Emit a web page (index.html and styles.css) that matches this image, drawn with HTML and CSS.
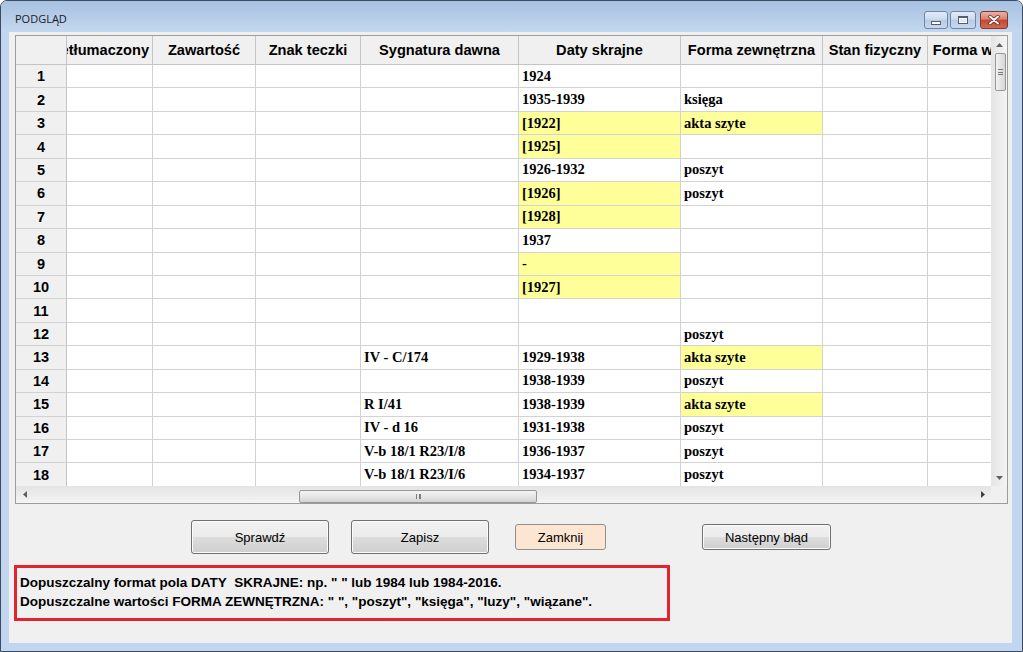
FILE: index.html
```html
<!DOCTYPE html>
<html lang="pl">
<head>
<meta charset="utf-8">
<title>PODGLĄD</title>
<link rel="stylesheet" href="styles.css">
</head>
<body>
<div class="window">
  <div class="titlebar">
    <span class="title">PODGLĄD</span>
    <div class="caption-btns">
      <div class="cbtn min"><span class="min-bar"></span></div>
      <div class="cbtn max"><span class="max-box"></span></div>
      <div class="cbtn close">
        <svg width="12" height="10" viewBox="0 0 12 10"><path d="M2 1.5 L10 8.5 M10 1.5 L2 8.5" stroke="#5a1a10" stroke-width="3.4" stroke-linecap="round"/><path d="M2 1.5 L10 8.5 M10 1.5 L2 8.5" stroke="#fff" stroke-width="2" stroke-linecap="round"/></svg>
      </div>
    </div>
  </div>
  <div class="frame">
    <div class="client">
      <div class="gridview">
        <div class="data">
          <div class="row head">
            <div class="c corner"></div>
            <div class="c hc clipl">Przetłumaczony</div>
            <div class="c hc">Zawartość</div>
            <div class="c hc">Znak teczki</div>
            <div class="c hc">Sygnatura dawna</div>
            <div class="c hc">Daty skrajne</div>
            <div class="c hc">Forma zewnętrzna</div>
            <div class="c hc">Stan fizyczny</div>
            <div class="c hc">Forma wewnętrzna</div>
          </div>
          <div class="row"><div class="c rh">1</div><div class="c"></div><div class="c"></div><div class="c"></div><div class="c"></div><div class="c">1924</div><div class="c"></div><div class="c"></div><div class="c"></div></div>
          <div class="row"><div class="c rh">2</div><div class="c"></div><div class="c"></div><div class="c"></div><div class="c"></div><div class="c">1935-1939</div><div class="c">księga</div><div class="c"></div><div class="c"></div></div>
          <div class="row"><div class="c rh">3</div><div class="c"></div><div class="c"></div><div class="c"></div><div class="c"></div><div class="c y">[1922]</div><div class="c y">akta szyte</div><div class="c"></div><div class="c"></div></div>
          <div class="row"><div class="c rh">4</div><div class="c"></div><div class="c"></div><div class="c"></div><div class="c"></div><div class="c y">[1925]</div><div class="c"></div><div class="c"></div><div class="c"></div></div>
          <div class="row"><div class="c rh">5</div><div class="c"></div><div class="c"></div><div class="c"></div><div class="c"></div><div class="c">1926-1932</div><div class="c">poszyt</div><div class="c"></div><div class="c"></div></div>
          <div class="row"><div class="c rh">6</div><div class="c"></div><div class="c"></div><div class="c"></div><div class="c"></div><div class="c y">[1926]</div><div class="c">poszyt</div><div class="c"></div><div class="c"></div></div>
          <div class="row"><div class="c rh">7</div><div class="c"></div><div class="c"></div><div class="c"></div><div class="c"></div><div class="c y">[1928]</div><div class="c"></div><div class="c"></div><div class="c"></div></div>
          <div class="row"><div class="c rh">8</div><div class="c"></div><div class="c"></div><div class="c"></div><div class="c"></div><div class="c">1937</div><div class="c"></div><div class="c"></div><div class="c"></div></div>
          <div class="row"><div class="c rh">9</div><div class="c"></div><div class="c"></div><div class="c"></div><div class="c"></div><div class="c y">-</div><div class="c"></div><div class="c"></div><div class="c"></div></div>
          <div class="row"><div class="c rh">10</div><div class="c"></div><div class="c"></div><div class="c"></div><div class="c"></div><div class="c y">[1927]</div><div class="c"></div><div class="c"></div><div class="c"></div></div>
          <div class="row"><div class="c rh">11</div><div class="c"></div><div class="c"></div><div class="c"></div><div class="c"></div><div class="c"></div><div class="c"></div><div class="c"></div><div class="c"></div></div>
          <div class="row"><div class="c rh">12</div><div class="c"></div><div class="c"></div><div class="c"></div><div class="c"></div><div class="c"></div><div class="c">poszyt</div><div class="c"></div><div class="c"></div></div>
          <div class="row"><div class="c rh">13</div><div class="c"></div><div class="c"></div><div class="c"></div><div class="c">IV - C/174</div><div class="c">1929-1938</div><div class="c y">akta szyte</div><div class="c"></div><div class="c"></div></div>
          <div class="row"><div class="c rh">14</div><div class="c"></div><div class="c"></div><div class="c"></div><div class="c"></div><div class="c">1938-1939</div><div class="c">poszyt</div><div class="c"></div><div class="c"></div></div>
          <div class="row"><div class="c rh">15</div><div class="c"></div><div class="c"></div><div class="c"></div><div class="c">R I/41</div><div class="c">1938-1939</div><div class="c y">akta szyte</div><div class="c"></div><div class="c"></div></div>
          <div class="row"><div class="c rh">16</div><div class="c"></div><div class="c"></div><div class="c"></div><div class="c">IV - d 16</div><div class="c">1931-1938</div><div class="c">poszyt</div><div class="c"></div><div class="c"></div></div>
          <div class="row"><div class="c rh">17</div><div class="c"></div><div class="c"></div><div class="c"></div><div class="c">V-b 18/1 R23/I/8</div><div class="c">1936-1937</div><div class="c">poszyt</div><div class="c"></div><div class="c"></div></div>
          <div class="row"><div class="c rh">18</div><div class="c"></div><div class="c"></div><div class="c"></div><div class="c">V-b 18/1 R23/I/6</div><div class="c">1934-1937</div><div class="c">poszyt</div><div class="c"></div><div class="c"></div></div>
        </div>
        <div class="vscroll">
          <div class="arrow"><svg width="7" height="4" viewBox="0 0 7 4"><path d="M0 4 L3.5 0 L7 4 Z" fill="#606060"/></svg></div>
          <div class="vthumb"><span class="grip-h"></span></div>
          <div class="vspace"></div>
          <div class="arrow"><svg width="7" height="4" viewBox="0 0 7 4"><path d="M0 0 L3.5 4 L7 0 Z" fill="#606060"/></svg></div>
        </div>
        <div class="hscroll">
          <div class="harrow"><svg width="4" height="7" viewBox="0 0 4 7"><path d="M4 0 L0 3.5 L4 7 Z" fill="#606060"/></svg></div>
          <div class="hgap"></div>
          <div class="hthumb"><span class="grip-v"></span></div>
          <div class="hspace"></div>
          <div class="harrow"><svg width="4" height="7" viewBox="0 0 4 7"><path d="M0 0 L4 3.5 L0 7 Z" fill="#404040"/></svg></div>
        </div>
        <div class="sbcorner"></div>
      </div>

      <div class="buttons">
        <button class="btn big b1">Sprawdź</button>
        <button class="btn big b2">Zapisz</button>
        <button class="btn small b3 focus">Zamknij</button>
        <button class="btn small b4">Następny błąd</button>
      </div>

      <div class="message">
        <p>Dopuszczalny format pola DATY&nbsp; SKRAJNE: np. " " lub 1984 lub 1984-2016.</p>
        <p>Dopuszczalne wartości FORMA ZEWNĘTRZNA: " ", "poszyt", "księga", "luzy", "wiązane".</p>
      </div>
    </div>
  </div>
</div>
</body>
</html>
```
FILE: styles.css
```css
* { box-sizing: border-box; margin: 0; padding: 0; }
html, body { width: 1023px; height: 652px; overflow: hidden; }
body { background: #ffffff; font-family: "Liberation Sans", Arial, sans-serif; color: #000; }

.window {
  width: 1023px;
  height: 652px;
  border: 1px solid #3a4b5f;
  border-radius: 7px 7px 0 0;
  background: #c2d7ef;
  display: flex;
  flex-direction: column;
  overflow: hidden;
}

.titlebar {
  height: 31px;
  flex: none;
  display: flex;
  align-items: flex-start;
  padding: 0 14px 0 14px;
  background: linear-gradient(to bottom, #a6c1e0 0%, #b4cbe8 45%, #c3d8ef 100%);
}
.title {
  font-family: "Open Sans", "Noto Sans", sans-serif;
  font-size: 11px;
  color: #1b1b1b;
  margin-top: 11px;
  line-height: 14px;
}
.caption-btns {
  margin-left: auto;
  margin-top: 10px;
  display: flex;
  gap: 2px;
}
.cbtn {
  height: 18px;
  border: 1px solid #6e86a6;
  border-radius: 3px;
  display: flex;
  align-items: center;
  justify-content: center;
}
.cbtn.min { width: 24px; }
.cbtn.max { width: 26px; }
.cbtn.min, .cbtn.max {
  background: linear-gradient(to bottom, #e3ecf7 0%, #cddbee 45%, #b7cbe6 50%, #c7d8ee 100%);
}
.cbtn.close {
  width: 28px;
  margin-left: 2px;
  border-color: #7a3a30;
  background: linear-gradient(to bottom, #eab1a5 0%, #d9826f 45%, #c7452e 50%, #d36a4f 100%);
}
.min-bar {
  width: 10px;
  height: 4px;
  margin-top: 6px;
  background: #fff;
  border: 1px solid #4e5f74;
}
.max-box {
  width: 10px;
  height: 8px;
  border: 1px solid #4e5f74;
  border-top-width: 2px;
  background: #dfe8f3;
  box-shadow: inset 0 0 0 1px #fff;
}

.frame {
  flex: 1;
  display: flex;
  padding: 0 10px 8px 8px;
}
.client {
  flex: 1;
  background: #f0f0f0;
  padding: 3px 0 0 0;
  display: flex;
  flex-direction: column;
}

/* DataGridView */
.gridview {
  width: 993px;
  height: 469px;
  margin-left: 6px;
  border: 1px solid #9c9c9c;
  background: #ffffff;
  display: grid;
  grid-template-columns: 975px 16px;
  grid-template-rows: 450px 17px;
}
.data {
  overflow: hidden;
  background: #ffffff;
}
.row {
  display: grid;
  grid-template-columns: 51px 86px 103px 105px 158px 162px 142px 105px 142px;
  height: 23.44px;
  width: 1054px;
}
.row.head { height: 29px; }
.c {
  border-right: 1px solid #d2d2d2;
  border-bottom: 1px solid #d2d2d2;
  font-family: "Liberation Serif", "Times New Roman", serif;
  font-weight: bold;
  font-size: 14.5px;
  padding-left: 3px;
  display: flex;
  align-items: center;
  white-space: nowrap;
  overflow: hidden;
  background: #ffffff;
}
.c.y { background: #ffff99; }
.head .c {
  background: #f0f0f0;
  border-bottom-color: #c4c4c4;
  border-right-color: #c4c4c4;
  font-family: "Liberation Sans", Arial, sans-serif;
  font-size: 14.6px;
  justify-content: center;
  padding-left: 0;
}
.head .c.clipl { justify-content: flex-end; padding-right: 3px; }
.c.rh {
  background: #f0f0f0;
  border-right-color: #c4c4c4;
  font-family: "Liberation Sans", Arial, sans-serif;
  font-size: 14.5px;
  justify-content: center;
  padding-left: 0;
}

/* scrollbars */
.vscroll {
  background: linear-gradient(to right, #e4e4e4, #f4f4f4);
  display: flex;
  flex-direction: column;
  align-items: center;
}
.arrow {
  height: 17px;
  width: 16px;
  flex: none;
  display: flex;
  align-items: center;
  justify-content: center;
}
.vthumb {
  width: 11px;
  height: 38px;
  margin-left: 3px;
  border: 1px solid #979797;
  border-radius: 2px;
  background: linear-gradient(to right, #f3f3f3, #e3e3e3 50%, #d6d6d6);
  display: flex;
  align-items: center;
  justify-content: center;
}
.grip-h {
  width: 5px;
  height: 6px;
  border-top: 1px solid #7a7a7a;
  border-bottom: 1px solid #7a7a7a;
  background: linear-gradient(to bottom, transparent 2px, #7a7a7a 2px, #7a7a7a 3px, transparent 3px);
}
.vspace { flex: 1; }

.hscroll {
  background: linear-gradient(to bottom, #e4e4e4, #f4f4f4);
  display: flex;
  align-items: center;
}
.harrow {
  width: 17px;
  height: 17px;
  flex: none;
  display: flex;
  align-items: center;
  justify-content: center;
}
.hgap { width: 266px; flex: none; }
.hthumb {
  width: 238px;
  height: 13px;
  margin-top: 3px;
  border: 1px solid #979797;
  border-radius: 2px;
  background: linear-gradient(to bottom, #f5f5f5, #e6e6e6 50%, #d4d4d4);
  display: flex;
  align-items: center;
  justify-content: center;
}
.grip-v {
  width: 5px;
  height: 5px;
  border-left: 1px solid #7a7a7a;
  border-right: 1px solid #7a7a7a;
  background: linear-gradient(to right, transparent 2px, #7a7a7a 2px, #7a7a7a 3px, transparent 3px);
}
.hspace { flex: 1; }
.sbcorner { background: #f0f0f0; }

/* buttons */
.buttons {
  display: flex;
  align-items: center;
  height: 34px;
  margin-top: 16px;
}
.btn {
  font-family: "Liberation Sans", Arial, sans-serif;
  font-size: 13px;
  color: #000;
  border: 1px solid #707070;
  border-radius: 3px;
  background: linear-gradient(to bottom, #f2f2f2 0%, #ebebeb 50%, #dddddd 50%, #cfcfcf 100%);
  box-shadow: inset 0 0 0 1px #fbfbfb;
}
.btn.big { width: 138px; height: 34px; }
.btn.small { height: 26px; }
.b1 { margin-left: 182px; }
.b2 { margin-left: 22px; }
.b3 { margin-left: 26px; width: 91px; }
.b4 { margin-left: 96px; width: 129px; }
.btn.focus {
  background: #fce6d1;
  border-color: #8f8f8f;
  box-shadow: none;
}

/* message */
.message {
  width: 656px;
  height: 56px;
  margin-top: 11px;
  margin-left: 5px;
  border: 3px solid #e1242d;
  padding: 5px 3px 3px;
  font-family: "Liberation Sans", Arial, sans-serif;
  font-weight: bold;
  font-size: 13.5px;
  line-height: 19px;
  white-space: nowrap;
}
```
